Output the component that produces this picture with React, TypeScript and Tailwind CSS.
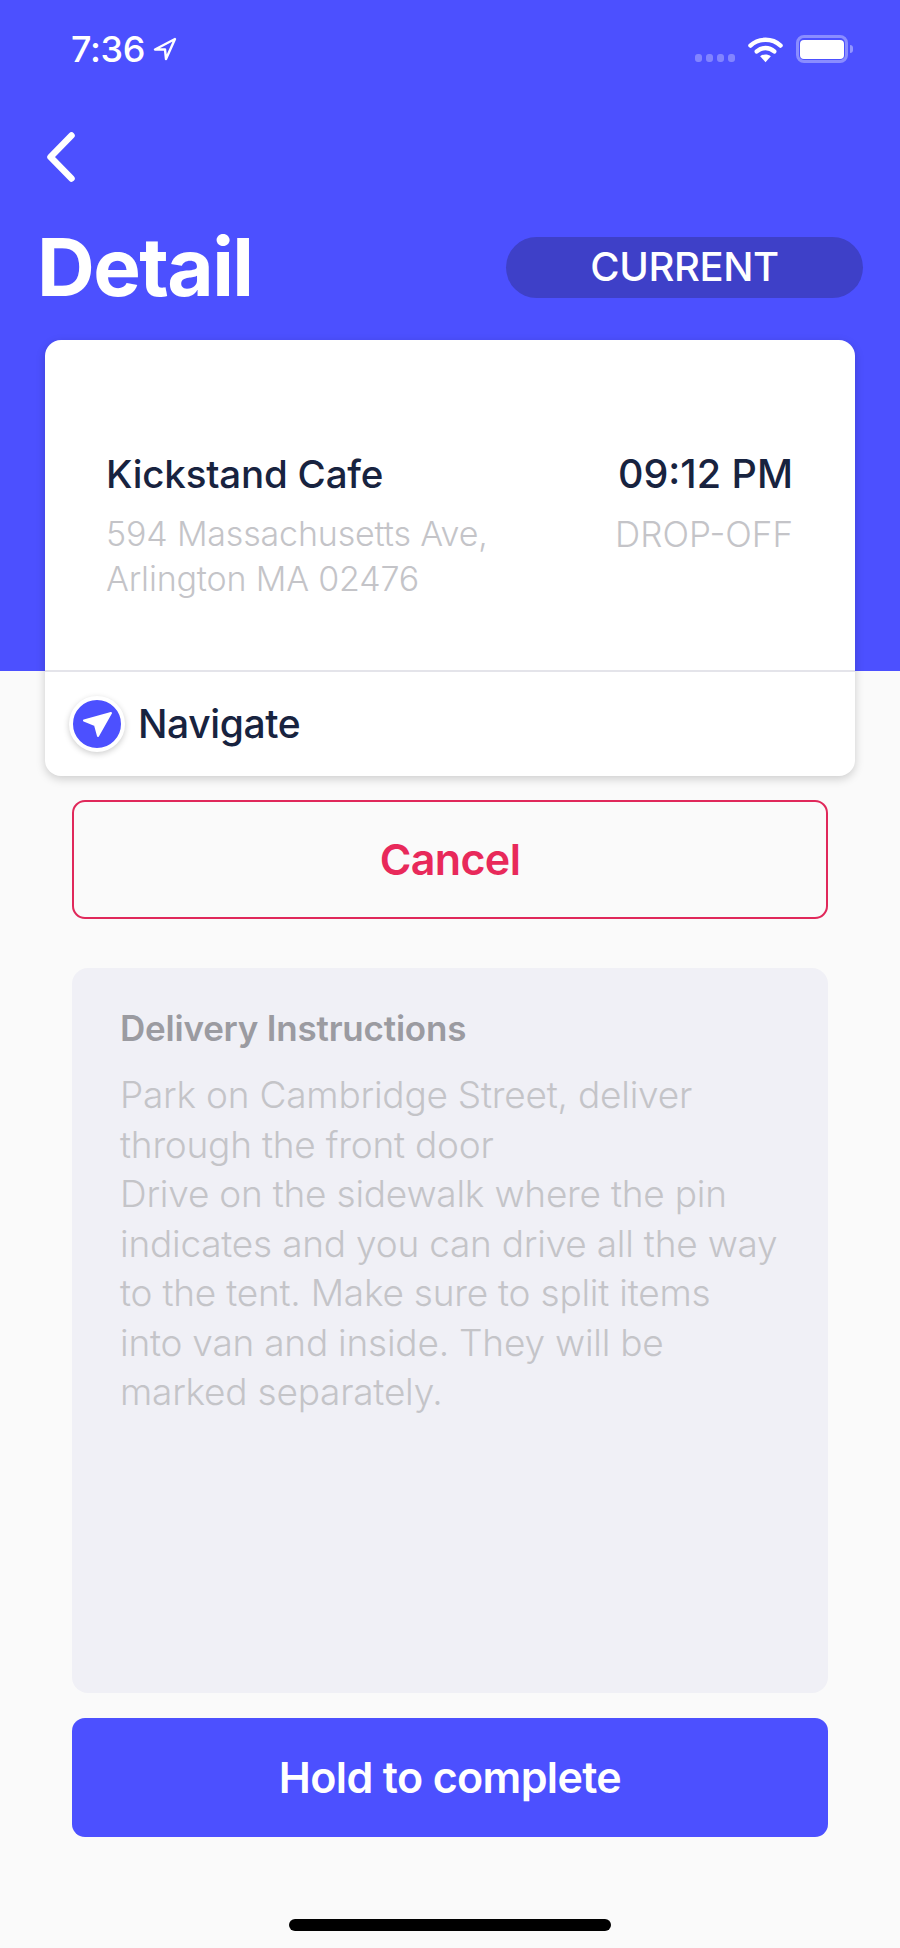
export default function App() {
  return (
    <div className="relative flex h-[1948px] w-[900px] flex-col overflow-hidden bg-[#fafafa] font-['Inter',sans-serif]">
      <div className="h-[671px] shrink-0 bg-[#4c50ff]">
        <div className="flex h-[127px] items-start justify-between pl-[71px] pr-[47px] pt-[27px]">
          <div className="flex items-center gap-[8px] text-white">
            <span className="text-[36px] font-medium leading-[44px] tracking-[-0.01em]">7:36</span>
            <svg width="24" height="24" viewBox="0 0 24 24" fill="none" stroke="#fff" strokeWidth="2.400" strokeLinejoin="round">
              <path d="M22 2 2 12.500h10l1 9.500z" />
            </svg>
          </div>
          <div className="flex items-center pt-[8px]">
            <div className="mt-[18px] flex gap-[4px]">
              <span className="h-[8px] w-[7px] rounded-[3px] bg-white/30" />
              <span className="h-[8px] w-[7px] rounded-[3px] bg-white/30" />
              <span className="h-[8px] w-[7px] rounded-[3px] bg-white/30" />
              <span className="h-[8px] w-[7px] rounded-[3px] bg-white/30" />
            </div>
            <svg className="ml-[13px]" width="35" height="27" viewBox="0 0 36 27" fill="none">
              <path d="M2.500 9.500C11 1.500 25 1.500 33.500 9.500" stroke="#fff" strokeWidth="4.500" strokeLinecap="round" />
              <path d="M9 15.500c5.400-4.800 12.600-4.800 18 0" stroke="#fff" strokeWidth="4.500" strokeLinecap="round" />
              <path d="M12.500 20.500c3-2.500 8-2.500 11 0L18 26.500z" fill="#fff" />
            </svg>
            <div className="ml-[13px] flex h-[28px] w-[52px] items-center justify-center rounded-[8px] border-[3px] border-white/35">
              <div className="h-[19px] w-[44px] rounded-[4px] bg-white" />
            </div>
            <div className="ml-[2px] h-[8px] w-[3px] rounded-r-full bg-white/40" />
          </div>
        </div>
        <div className="flex h-[60px] items-center pl-[47px]">
          <svg width="28" height="50" viewBox="0 0 28 50" fill="none" stroke="#fff" strokeWidth="6.500" strokeLinecap="round" strokeLinejoin="round">
            <path d="M24.500 3.500 3.500 25l21 21.500" />
          </svg>
        </div>
        <div className="mt-[41px] flex items-center justify-between pl-[37px] pr-[37px]">
          <h1 className="text-[80px] font-bold leading-[78px] tracking-[-0.02em] text-white">Detail</h1>
          <div className="flex h-[61px] w-[357px] items-center justify-center rounded-full bg-[#3e40c8] text-[40px] font-medium tracking-[-0.01em] text-white">CURRENT</div>
        </div>
      </div>

      <div className="-mt-[331px] z-10 mx-[45px] flex h-[436px] shrink-0 flex-col rounded-[16px] bg-white shadow-[0_3px_10px_rgba(0,0,0,0.18)]">
        <div className="flex h-[330px] justify-between pl-[61px] pr-[62px] pt-[112px]">
          <div>
            <div className="text-[38.500px] font-medium leading-[44px] tracking-[-0.005em] text-[#18233f]">Kickstand Cafe</div>
            <div className="mt-[16px] text-[34px] font-light leading-[44.500px] tracking-[-0.005em] text-[#c4c4c8]">594 Massachusetts Ave,<br />Arlington MA 02476</div>
          </div>
          <div className="text-right">
            <div className="text-[39.500px] font-medium leading-[44px] text-[#18233f]">09:12 PM</div>
            <div className="mt-[16px] text-[35px] font-light leading-[44.500px] text-[#c4c4c8]">DROP-OFF</div>
          </div>
        </div>
        <div className="flex flex-1 items-center border-t-2 border-[#e4e4ea] pl-[24px]">
          <div className="flex h-[56px] w-[56px] items-center justify-center rounded-full border-[4px] border-white bg-[#4c50ff] shadow-[0_2px_6px_rgba(0,0,0,0.2)]">
            <svg width="30" height="30" viewBox="0 0 30 30" fill="#fff" stroke="#fff" strokeWidth="2" strokeLinejoin="round">
              <path d="M29 4 2 11.500 13 16l3 11z" />
            </svg>
          </div>
          <span className="ml-[13px] text-[39px] font-medium tracking-[-0.01em] text-[#18233f]">Navigate</span>
        </div>
      </div>

      <div className="mx-[72px] mt-[24px] flex h-[119px] shrink-0 items-center justify-center rounded-[13px] border-2 border-[#e0285a] text-[43px] font-semibold tracking-[-0.015em] text-[#e8295a]">Cancel</div>

      <div className="mx-[72px] mt-[49px] h-[725px] shrink-0 rounded-[16px] bg-[#f0f0f6] pl-[48px] pr-[49px] pt-[38px]">
        <div className="text-[35px] font-semibold leading-[44px] tracking-[-0.006em] text-[#9b9ba1]">Delivery Instructions</div>
        <div className="mt-[20px] text-[37px] font-light leading-[49.500px] tracking-[-0.006em] text-[#c4c4c8]">
          Park on Cambridge Street, deliver through the front door<br />
          Drive on the sidewalk where the pin indicates and you can drive all the way to the tent. Make sure to split items into van and inside. They will be marked separately.
        </div>
      </div>

      <div className="mx-[72px] mt-[25px] flex h-[119px] shrink-0 items-center justify-center rounded-[13px] bg-[#4c50ff] text-[43px] font-semibold tracking-[-0.015em] text-white">Hold to complete</div>

      <div className="mx-auto mt-[82px] h-[12px] w-[322px] rounded-full bg-black" />
    </div>
  );
}
